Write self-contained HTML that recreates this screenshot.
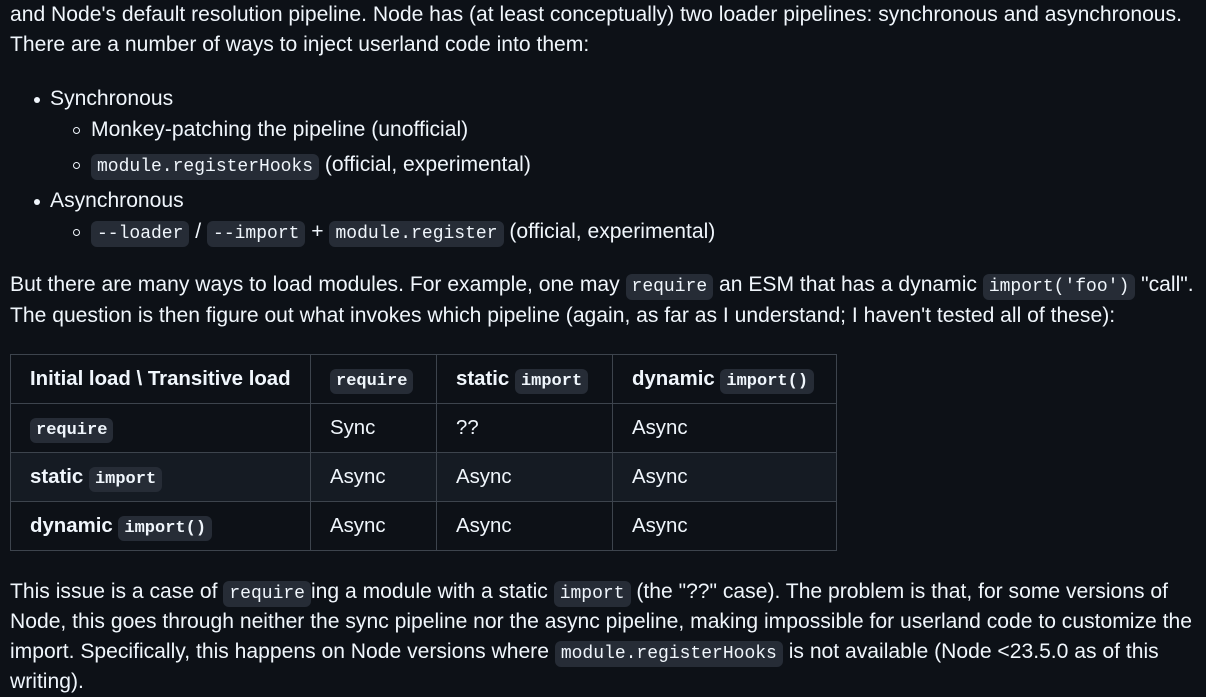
<!DOCTYPE html>
<html><head><meta charset="utf-8"><style>
body{margin:0;background:#0d1117;color:#f0f6fc;font-family:"Liberation Sans",sans-serif;font-size:21.1px;width:1206px;height:681px;overflow:hidden;position:relative}
.l{position:absolute;left:10px;white-space:nowrap;line-height:30px}
code{font-family:"Liberation Mono",monospace;font-size:18px;background:#262c36;border-radius:6px;padding:3px 6px}
.b{position:absolute;width:6px;height:6px;border-radius:50%;background:#f0f6fc}
.c{position:absolute;width:5px;height:5px;border-radius:50%;border:1px solid #f0f6fc}
table{position:absolute;left:10px;top:354px;border-collapse:collapse;table-layout:fixed;font-size:20.4px}
table code{font-size:17px}
td,th{border:1px solid #3d444d;height:48px;padding:0 19px;text-align:left;white-space:nowrap;overflow:hidden}
th{font-weight:bold}
tr.alt td{background:#151b23}
</style></head><body>
<div class="l" style="top:0">and Node's default resolution pipeline. Node has (at least conceptually) two loader pipelines: synchronous and asynchronous.</div>
<div class="l" style="top:30px">There are a number of ways to inject userland code into them:</div>
<div class="b" style="left:34px;top:97px"></div>
<div class="l" style="left:50px;top:84px">Synchronous</div>
<div class="c" style="left:73px;top:127px"></div>
<div class="l" style="left:91px;top:115px">Monkey-patching the pipeline (unofficial)</div>
<div class="c" style="left:73px;top:162px"></div>
<div class="l" style="left:91px;top:150px"><code>module.registerHooks</code> (official, experimental)</div>
<div class="b" style="left:34px;top:199px"></div>
<div class="l" style="left:50px;top:186px">Asynchronous</div>
<div class="c" style="left:73px;top:229px"></div>
<div class="l" style="left:91px;top:217px"><code>--loader</code> / <code>--import</code> + <code>module.register</code> (official, experimental)</div>
<div class="l" style="top:270px">But there are many ways to load modules. For example, one may <code>require</code> an ESM that has a dynamic <code>import('foo')</code> "call".</div>
<div class="l" style="top:301px">The question is then figure out what invokes which pipeline (again, as far as I understand; I haven't tested all of these):</div>
<table>
<colgroup><col style="width:300px"><col style="width:126px"><col style="width:176px"><col style="width:224px"></colgroup>
<tr><th>Initial load \ Transitive load</th><th><code>require</code></th><th>static <code>import</code></th><th>dynamic <code>import()</code></th></tr>
<tr><th><code>require</code></th><td>Sync</td><td>??</td><td>Async</td></tr>
<tr class="alt"><th style="background:#151b23">static <code>import</code></th><td>Async</td><td>Async</td><td>Async</td></tr>
<tr><th>dynamic <code>import()</code></th><td>Async</td><td>Async</td><td>Async</td></tr>
</table>
<div class="l" style="top:577px">This issue is a case of <code>require</code>ing a module with a static <code>import</code> (the "??" case). The problem is that, for some versions of</div>
<div class="l" style="top:607px">Node, this goes through neither the sync pipeline nor the async pipeline, making impossible for userland code to customize the</div>
<div class="l" style="top:637px">import. Specifically, this happens on Node versions where <code>module.registerHooks</code> is not available (Node &lt;23.5.0 as of this</div>
<div class="l" style="top:667px">writing).</div>
</body></html>
